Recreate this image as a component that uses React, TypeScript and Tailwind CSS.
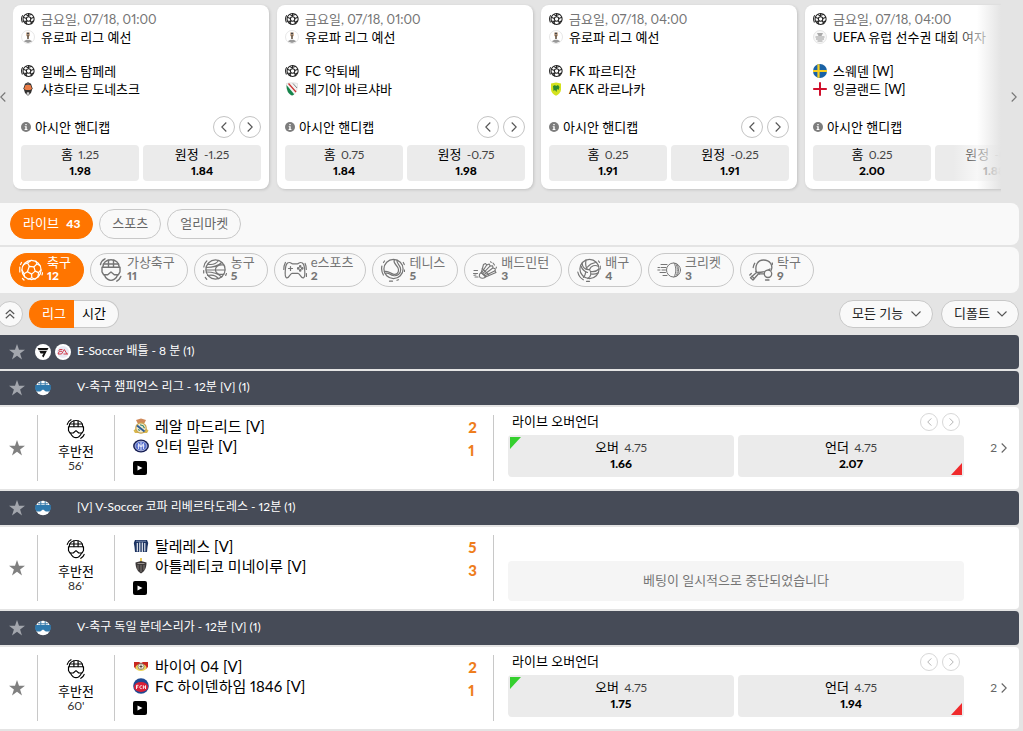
import React, { useState } from 'react';

interface FeaturedMatch {
  date: string;
  league: string;
  leagueIcon: React.ReactNode;
  home: string;
  homeIcon: React.ReactNode;
  away: string;
  awayIcon: React.ReactNode;
  homeLine: string;
  homeOdds: string;
  awayLine: string;
  awayOdds: string;
}

interface LiveMatch {
  minute: string;
  home: string;
  homeIcon: React.ReactNode;
  away: string;
  awayIcon: React.ReactNode;
  score: [number, number];
  odds?: [string, string];
}

interface League {
  title: string;
  esport?: boolean;
  match?: LiveMatch;
}

/* ---------- icons ---------- */

const BallIcon = () => (
  <svg viewBox="0 0 24 24" className="size-6" fill="none" stroke="currentColor" strokeWidth="1.2" strokeLinejoin="round" strokeLinecap="round">
    <circle cx="12.5" cy="12" r="9.6" />
    <path d="M10.3 8.3l4.6.6 1.3 4.2-3.600 3-4.200-2.300z" />
    <path d="M10.300 8.300L8.500 5l3.500-2.600M8.500 5L4.600 6.500M14.900 8.900L17.900 6l3 1.400M17.900 6l-1-3M16.200 13.100l3.400 1.500 2.300-2.600M19.600 14.600l-.7 4.200M12.600 16.100l.2 3.600 3.300 1.600M12.800 19.700l-3.700 1.600M8.400 13.800l-3.300 1.900.4 3.200M5.100 15.700L3 12" />
    <path d="M.8 9v5M2.500 4.500L1.500 6.500M23.800 14.500l-.8 2.500M3.500 20.500L5 22" />
  </svg>
);

const SmallBall = () => (
  <svg viewBox="0 0 24 24" className="size-3.5 shrink-0 text-[#222]" fill="none" stroke="currentColor" strokeWidth="1.8">
    <circle cx="13" cy="12" r="9.5" />
    <circle cx="13" cy="12" r="3.8" />
    <path d="M13 8.2V2.5M16.7 11l5.6-2M15.3 15l3.6 5M10.7 15l-3.5 5M9.3 11L3.800 9M8 4l3 2 4-1 4-1M4 16l4 0 2 5M22 15l-4 2-1 4M3 5.500C1 8 .8 14 2.500 18" />
  </svg>
);

const HelmetIcon: React.FC<{ className?: string }> = ({ className }) => (
  <svg viewBox="0 0 24 24" className={className} fill="none" stroke="currentColor" strokeWidth="1.4" strokeLinejoin="round" strokeLinecap="round">
    <path d="M3.800 9.300C3.800 4.500 7.500 1.800 12 1.800s8.200 2.700 8.200 7.500" />
    <path d="M3 9.300h18v4.500l-1.700 3h-4L12 14l-3.300 2.800h-4L3 13.800z" />
    <path d="M5.500 17c.5 2 1.500 3.200 3 4.200 2.200 1.500 4.800 1.500 7 0 1.500-1 2.500-2.200 3-4.200" />
    <path d="M9.500 2.300v6.800M14.500 2.300v6.800M4.500 6h15M1.500 6.500C2 4 3.500 2 6 .8M21.800 18.500c-.8 2-2 3.500-4 4.700" />
  </svg>
);

const BasketballIcon = () => (
  <svg viewBox="0 0 24 24" className="size-6" fill="none" stroke="currentColor" strokeWidth="1.200" strokeLinecap="round">
    <circle cx="12.500" cy="11.500" r="9.600" />
    <path d="M3 12h19M4.500 6.200C9 7 13.500 5.500 15.500 2.500M4.500 17.500c4.500-1 9 .5 11 3.200M21 7C9.500 5 9.500 18.500 21 16.200M3.200 9.500c4.500 0 11-.5 15.500-5M3.200 14c4.500 0 11 .5 15.500 5" />
    <path d="M.8 9c.2-2.500 1.300-4.600 3-6M2.300 19.500l1.500 1.800M.7 12.500v2.500M23.500 15.500l-.8 2" />
  </svg>
);

const GamepadIcon = () => (
  <svg viewBox="0 0 24 24" className="size-6" fill="none" stroke="currentColor" strokeWidth="1.200" strokeLinejoin="round" strokeLinecap="round">
    <path d="M6.500 4.500c1.500 0 2 1.300 3 1.300h5c1 0 1.500-1.300 3-1.300 3.200 0 3.700 2.500 4.100 6.500.3 3 .6 8.200-1.200 8.900-2.300.8-3.400-4.500-5.400-4.500H9c-2 0-3.100 5.300-5.400 4.500-1.800-.7-1.500-5.900-1.200-8.900.4-4 .9-6.500 4.100-6.500z" />
    <path d="M7.500 8.500v4M5.500 10.500h4M.8 11.500c0-3 .5-5 1.600-7M23.300 11.500c0-3-.4-4.500-1.200-6M23.400 15.500v3" />
    <circle cx="17.200" cy="8.400" r=".7" /><circle cx="17.200" cy="12.400" r=".7" />
    <circle cx="15.200" cy="10.400" r=".7" /><circle cx="19.200" cy="10.400" r=".7" />
  </svg>
);

const TennisIcon = () => (
  <svg viewBox="0 0 24 24" className="size-6" fill="none" stroke="currentColor" strokeWidth="1.200" strokeLinecap="round">
    <circle cx="12.500" cy="11" r="9.600" />
    <path d="M13.300 1.600c-1.800 4.400 3.700 5.400 4.200 9.900.4 3.500-2.200 5.500-5.300 4.700-3.200-.8-4.200-3.700-8.900-2.700M16 2.300c-.8 3.200 3.600 4.700 3.700 9.200.1 4.500-3.500 7-7.700 6-3-.7-4-3-7-2.300" />
    <path d="M.9 8c-.7 3-.2 6 1.500 9M2.500 4.500l1-1.500M8.500 23.200h3M22.300 4.500l1 2M16 22.300l1.500-.6M23.500 12v1.500" />
  </svg>
);

const ShuttleIcon = () => (
  <svg viewBox="0 0 24 24" className="size-6" fill="none" stroke="currentColor" strokeWidth="1.100" strokeLinejoin="round" strokeLinecap="round">
    <path d="M8.300 14.500L10.500 6.500l2-1 1.200 1.500 2.500-1 1 2 2.500-.3.300 2.300 2.300.7-.3 2.300 1 1.500-10.500 4.500" />
    <path d="M8.300 14.500c-2 .8-2.500 3.500-1.300 4.800 1.500 1.500 4.500 1.200 5.500-.6z" />
    <path d="M9.200 14l4.500-7M10.200 15.200l6.800-7M11.200 16.500l8.600-6.500M12 17.800l10-5M9.300 10.500l6.500 6.300M8.300 14.500l4.200 4.200M1 12.500h3.500M.5 15.500h4M2 19h3M1 17.300l2-.3M20 5l1.500 2M17.500 3.800l.8.600M23.300 9v1" />
  </svg>
);

const VolleyballIcon = () => (
  <svg viewBox="0 0 24 24" className="size-6" fill="none" stroke="currentColor" strokeWidth="1.200" strokeLinecap="round">
    <circle cx="12.500" cy="11" r="9.600" />
    <path d="M12.500 11.500C8 12 5.500 9 5 5.200M12.500 11.500c1.500-4 5.500-5 9.200-3M12.500 11.500c2.500 3.500 1.500 7-1.700 9" />
    <path d="M10 10.800C8.500 8.500 8.500 5 9 2.200M4 8c1 3 3.500 5.500 6.500 6.500M10.500 9c2-2.500 5-4 8-4.500M14 13.500c3 .5 6-.5 8-2.500M14.300 16c2.500.5 4.500 0 6.500-1M8.800 13.600c-.3 2.500-1 4.500-2.300 5.700" />
    <path d="M.8 14c.7 3.500 2.500 6 5.500 7.800M23.800 8v3M9.500 23.300h3M21.500 3l1 1.300" />
  </svg>
);

const CricketIcon = () => (
  <svg viewBox="0 0 24 24" className="size-6" fill="none" stroke="currentColor" strokeWidth="1" strokeLinecap="round">
    <circle cx="16.500" cy="12" r="7" />
    <path d="M17 5c2.500 4 2.500 10 0 14M20 6c2 3.500 2 8.500 0 12" />
    <path d="M18.500 5.500c2.500 4 2.500 9 0 13" strokeDasharray="1 1.200" />
    <path d="M4 6.500h6M1 9.500h1.500M4 9.500h5M.8 12H3M5 12h3.500M3 14.500h5.500M6 17.500h4" />
  </svg>
);

const PingPongIcon = () => (
  <svg viewBox="0 0 24 24" className="size-6" fill="none" stroke="currentColor" strokeWidth="1.300" strokeLinejoin="round" strokeLinecap="round">
    <path d="M15 15.800H9.500L4 22l-2.500-2.300 6-5.200c-2-6.500 1-12.500 7-12.500 6.500 0 10 5.500 7.500 10.500" />
    <path d="M6.800 13.500l3.700 2.500M8 14.500c4 0 9-.5 13-3.500M3 18.300l2.400 2.300M4.200 9.500c.2-1.500.7-3 1.500-4.200M23.200 5l.6 1.500M.8 17L2.300 15.500M16.500 22h3.500" />
    <circle cx="19" cy="15.800" r="3.700" fill="#f9f9f9" />
  </svg>
);

const StarIcon = () => (
  <svg viewBox="0 0 16 16" className="size-4" fill="currentColor">
    <path d="M8 0l2 5.800h6l-4.900 3.600L13 15.500 8 11.800l-5 3.700 1.900-6.100L0 5.800h6z" />
  </svg>
);

const Chevron: React.FC<{ left?: boolean; className?: string }> = ({ left, className = 'h-2.5 w-[6px]' }) => (
  <svg viewBox="0 0 6 10" className={className} fill="none" stroke="currentColor" strokeWidth="1.100">
    <path d={left ? 'M5.300.5L.8 5l4.500 4.500' : 'M.7.5L5.200 5 .7 9.500'} />
  </svg>
);

const InfoIcon = () => (
  <svg viewBox="0 0 10 10" className="size-2.5 shrink-0">
    <circle cx="5" cy="5" r="5" fill="#7d7d7d" />
    <path d="M4.300 2h1.400v1.300H4.300zM3.700 4.200h2v2.900h.7V8H3.600v-.9h.7V5.100h-.6z" fill="#fff" />
  </svg>
);

/* ---------- crests ---------- */

const EuropaCrest = () => (
  <svg viewBox="0 0 14 14" className="size-3.5 shrink-0">
    <circle cx="7" cy="7" r="6.500" fill="#fff" stroke="#ddd" strokeWidth=".7" />
    <path d="M5 2.500h4v3L7 7.500l-2-2z" fill="#cfb49c" />
    <path d="M6.200 5h1.600v4H6.200z" fill="#654" />
    <path d="M3 11.500c1-2.500 7-2.500 8 0l-4 1.500z" fill="#999" />
    <circle cx="7" cy="3.500" r="1.100" fill="#444" />
  </svg>
);

const UefaCrest = () => (
  <svg viewBox="0 0 14 14" className="size-3.5 shrink-0">
    <circle cx="7" cy="7" r="6.500" fill="#f7f7f7" stroke="#ddd" strokeWidth=".7" />
    <path d="M4 3h6L8.500 6h-3z" fill="#aaa" />
    <path d="M2.500 7h9M3 9h8M4.500 11h5" stroke="#999" strokeWidth="1" />
  </svg>
);

const ShakhtarCrest = () => (
  <svg viewBox="0 0 14 14" className="size-3.5 shrink-0">
    <path d="M7 .3l3 1.500 1.500 4.500L10 11l-3 2.700L4 11 2.500 6.300 4 1.800z" fill="#32302f" />
    <path d="M4.500 3h5l1.500 4-2 1H5L3 7z" fill="#e97b46" />
    <path d="M5.500 2h3M6 10.500h2v2H6z" stroke="#bbb" strokeWidth=".6" fill="#ddd" />
  </svg>
);

const LegiaCrest = () => (
  <svg viewBox="0 0 14 14" className="size-3.5 shrink-0">
    <path d="M1.500 1.500C5 .5 9 .5 12.500 1.500c0 6-1 10-5.500 12-4.500-2-5.500-6-5.500-12z" fill="#f4f4f4" stroke="#ccc" strokeWidth=".5" />
    <path d="M1.500 3l7.700 9.200c-.6.500-1.300.9-2.200 1.300-4.200-1.800-5.300-5.500-5.500-10.500z" fill="#15854b" />
    <path d="M3.500 1.500l7.500 8.500" stroke="#c33" strokeWidth="1.300" />
    <path d="M8 1.500l4 4.500" stroke="#555" strokeWidth=".7" />
  </svg>
);

const AekCrest = () => (
  <svg viewBox="0 0 14 14" className="size-3.5 shrink-0">
    <path d="M2 1.500L7 .5l5 1v6c0 3-2.500 5-5 6.200C4.500 12.500 2 10.500 2 7.500z" fill="#d4e21e" />
    <path d="M4 4l2-1 1 1 2-1 1.500 2-1 3L8 7l-.5 3L6 8 4.500 9z" fill="#2b8a2d" />
  </svg>
);

const SwedenFlag = () => (
  <svg viewBox="0 0 14 14" className="size-3.5 shrink-0">
    <circle cx="7" cy="7" r="7" fill="#1a62a5" />
    <path d="M5.500.2v13.600M0 7h14" stroke="#f8cf20" strokeWidth="2.200" />
  </svg>
);

const EnglandFlag = () => (
  <svg viewBox="0 0 14 14" className="size-3.5 shrink-0">
    <circle cx="7" cy="7" r="7" fill="#fff" />
    <path d="M7 .2v13.600M.2 7h13.600" stroke="#d0102c" strokeWidth="2" />
  </svg>
);

const RealCrest = () => (
  <svg viewBox="0 0 16 16" className="size-4 shrink-0">
    <path d="M4.500 5L3 2 8 .5 13 2l-1.500 3z" fill="#d08a5a" />
    <path d="M.5 12.500l3-2.500h9l3 2.500-1.500 2.500h-12z" fill="#d9b94f" />
    <circle cx="8" cy="10" r="5.200" fill="#f3ead0" stroke="#c9a24a" strokeWidth="1.200" />
    <path d="M4 7.500l7.500 6" stroke="#2a5c97" strokeWidth="2" />
    <path d="M7 6.800l3 1 1.500 2.500M5 11.500l2 1" stroke="#3b8a70" strokeWidth="1.200" fill="none" />
  </svg>
);

const InterCrest = () => (
  <svg viewBox="0 0 16 16" className="size-4 shrink-0">
    <ellipse cx="8" cy="8" rx="7.900" ry="6.500" fill="#10184f" />
    <ellipse cx="8" cy="8" rx="6" ry="4.800" fill="#5a72cf" stroke="#dfe4f7" strokeWidth=".7" />
    <path d="M5.500 11V5.500L8 9l2.500-3.500V11M8 4v8M4.500 8h7" stroke="#e6eafa" strokeWidth=".9" fill="none" />
  </svg>
);

const TalleresCrest = () => (
  <svg viewBox="0 0 16 16" className="size-4 shrink-0">
    <path d="M2 2h12l1.200 3-.7 4-.5 5H2l-.5-5-.7-4z" fill="#1c3361" />
    <path d="M4.300 5v8.500M6.800 4.500V14M9.300 4.500V14M11.800 5v8.500" stroke="#f4f6fa" strokeWidth="1.100" />
    <path d="M3 3.200h10" stroke="#8fa0c0" strokeWidth=".8" />
  </svg>
);

const MineiroCrest = () => (
  <svg viewBox="0 0 16 16" className="size-4 shrink-0">
    <path d="M8 0v4" stroke="#e6bd28" strokeWidth="1.500" />
    <path d="M2.500 4.500L8 3l5.500 1.500C13.500 9.500 12 13 8 15.500 4 13 2.500 9.500 2.500 4.500z" fill="#3c3838" />
    <path d="M5 7v5M8 7v7M11 7v5" stroke="#8d8884" strokeWidth=".8" />
    <path d="M4.500 5.500h7" stroke="#b0aaa4" strokeWidth=".8" />
  </svg>
);

const LeverkusenCrest = () => (
  <svg viewBox="0 0 16 16" className="size-4 shrink-0">
    <path d="M1 4h5l2 1 2-1h5v5l-2 2H3L1 9z" fill="#c8281f" />
    <ellipse cx="8" cy="9.500" rx="5.500" ry="3.600" fill="#ead45c" />
    <circle cx="8" cy="8.500" r="3" fill="#f6f0dc" stroke="#555" strokeWidth=".6" />
    <path d="M6.500 8.500h3M8 6.500v4" stroke="#333" strokeWidth=".8" />
  </svg>
);

const HeidenheimCrest = () => (
  <svg viewBox="0 0 16 16" className="size-4 shrink-0">
    <circle cx="8" cy="8" r="7.800" fill="#1f4a93" />
    <ellipse cx="8" cy="9" rx="7" ry="5" fill="#da1f37" />
    <path d="M3.500 11V7.300h2M3.500 9h1.700M8.700 7.600c-2.500-.6-2.500 3.700 0 3M10.300 7.300V11M12.500 7.300V11M10.300 9h2.200" stroke="#fff" strokeWidth=".9" fill="none" />
  </svg>
);

const BattleBadge = () => (
  <svg viewBox="0 0 16 16" className="size-4 shrink-0">
    <circle cx="8" cy="8" r="8" fill="#fff" />
    <path d="M2.500 4h11l-1.200 2.200H3.700zM4.300 7h7.500L8.500 13.500 7 12l1.500-2.500H5.600z" fill="#111" />
  </svg>
);

const EaBadge = () => (
  <svg viewBox="0 0 16 16" className="size-4 shrink-0">
    <circle cx="8" cy="8" r="8" fill="#fff" />
    <circle cx="8" cy="8" r="6" fill="#e9e9f3" />
    <path d="M7.500 5.500h-3l-.7 1.300M7 7.300H4.300L3 10h3.500l2.800-4.500L12 10h-3.500M12 10h1" stroke="#d23b4b" strokeWidth="1" fill="none" />
  </svg>
);

const VirtualBadge = () => (
  <svg viewBox="0 0 16 16" className="size-4 shrink-0">
    <circle cx="8" cy="8" r="7.300" fill="#fff" />
    <path d="M5.800 1v4M10.200 1v4M3 3.800h10" stroke="#397aa8" strokeWidth="1" />
    <path d="M.2 5h15.600v4.500l-1.600 2h-3.400L8 9.500l-2.800 2H1.800L.2 9.500z" fill="#2f79ad" />
  </svg>
);

/* ---------- data ---------- */

const featured: FeaturedMatch[] = [
  {
    date: '금요일, 07/18, 01:00', league: '유로파 리그 예선', leagueIcon: <EuropaCrest />,
    home: '일베스 탐페레', homeIcon: <SmallBall />, away: '샤흐타르 도네츠크', awayIcon: <ShakhtarCrest />,
    homeLine: '1.25', homeOdds: '1.98', awayLine: '-1.25', awayOdds: '1.84',
  },
  {
    date: '금요일, 07/18, 01:00', league: '유로파 리그 예선', leagueIcon: <EuropaCrest />,
    home: 'FC 악퇴베', homeIcon: <SmallBall />, away: '레기아 바르샤바', awayIcon: <LegiaCrest />,
    homeLine: '0.75', homeOdds: '1.84', awayLine: '-0.75', awayOdds: '1.98',
  },
  {
    date: '금요일, 07/18, 04:00', league: '유로파 리그 예선', leagueIcon: <EuropaCrest />,
    home: 'FK 파르티잔', homeIcon: <SmallBall />, away: 'AEK 라르나카', awayIcon: <AekCrest />,
    homeLine: '0.25', homeOdds: '1.91', awayLine: '-0.25', awayOdds: '1.91',
  },
  {
    date: '금요일, 07/18, 04:00', league: 'UEFA 유럽 선수권 대회 여자', leagueIcon: <UefaCrest />,
    home: '스웨덴 [W]', homeIcon: <SwedenFlag />, away: '잉글랜드 [W]', awayIcon: <EnglandFlag />,
    homeLine: '0.25', homeOdds: '2.00', awayLine: '-0.25', awayOdds: '1.88',
  },
];

const sports = [
  { name: '축구', count: 12, icon: <BallIcon /> },
  { name: '가상축구', count: 11, icon: <HelmetIcon className="size-6" /> },
  { name: '농구', count: 5, icon: <BasketballIcon /> },
  { name: 'e스포츠', count: 2, icon: <GamepadIcon /> },
  { name: '테니스', count: 5, icon: <TennisIcon /> },
  { name: '배드민턴', count: 3, icon: <ShuttleIcon /> },
  { name: '배구', count: 4, icon: <VolleyballIcon /> },
  { name: '크리켓', count: 3, icon: <CricketIcon /> },
  { name: '탁구', count: 9, icon: <PingPongIcon /> },
];

const leagues: League[] = [
  { title: 'E-Soccer 배틀 - 8 분 (1)', esport: true },
  {
    title: 'V-축구 챔피언스 리그 - 12분 [V] (1)',
    match: {
      minute: "56'", home: '레알 마드리드 [V]', homeIcon: <RealCrest />, away: '인터 밀란 [V]', awayIcon: <InterCrest />,
      score: [2, 1], odds: ['1.66', '2.07'],
    },
  },
  {
    title: '[V] V-Soccer 코파 리베르타도레스 - 12분 (1)',
    match: {
      minute: "86'", home: '탈레레스 [V]', homeIcon: <TalleresCrest />, away: '아틀레티코 미네이루 [V]', awayIcon: <MineiroCrest />,
      score: [5, 3],
    },
  },
  {
    title: 'V-축구 독일 분데스리가 - 12분 [V] (1)',
    match: {
      minute: "60'", home: '바이어 04 [V]', homeIcon: <LeverkusenCrest />, away: 'FC 하이덴하임 1846 [V]', awayIcon: <HeidenheimCrest />,
      score: [2, 1], odds: ['1.75', '1.94'],
    },
  },
];

/* ---------- pieces ---------- */

const OddsLabel: React.FC<{ name: string; line: string; odds: string }> = ({ name, line, odds }) => (
  <>
    <span className="block text-[13px] leading-4 whitespace-nowrap">
      {name} <span className="ml-0.5 text-xs leading-4 text-[#444]">{line}</span>
    </span>
    <span className="block text-xs leading-4 font-black">{odds}</span>
  </>
);

const IconLine: React.FC<{ icon: React.ReactNode; text: string; muted?: boolean }> = ({ icon, text, muted }) => (
  <div className="flex h-[18px] items-center gap-1.5">
    {icon}
    <span className={`whitespace-nowrap ${muted ? 'text-[#757575]' : ''}`}>{text}</span>
  </div>
);

const FeaturedCard: React.FC<{ match: FeaturedMatch }> = ({ match }) => (
  <article className="w-64 shrink-0 rounded-lg bg-white px-2 pt-[5px] pb-2 text-[13px] leading-[18px] shadow-[1px_1px_3px_rgba(0,0,0,0.15)]">
    <IconLine icon={<SmallBall />} text={match.date} muted />
    <IconLine icon={match.leagueIcon} text={match.league} />
    <div className="mt-4">
      <IconLine icon={match.homeIcon} text={match.home} />
      <IconLine icon={match.awayIcon} text={match.away} />
    </div>
    <div className="mt-[18px] flex h-[22px] items-center gap-1">
      <InfoIcon />
      <span className="flex-1">아시안 핸디캡</span>
      <button aria-label="이전 마켓" className="flex size-[22px] items-center justify-center rounded-full border border-[#c4c4c4] text-[#555]">
        <Chevron left />
      </button>
      <button aria-label="다음 마켓" className="flex size-[22px] items-center justify-center rounded-full border border-[#c4c4c4] text-[#555]">
        <Chevron />
      </button>
    </div>
    <div className="mt-[7px] grid grid-cols-2 gap-1">
      <button className="h-9 rounded bg-[#ebebeb] pb-0.5">
        <OddsLabel name="홈" line={match.homeLine} odds={match.homeOdds} />
      </button>
      <button className="h-9 rounded bg-[#ebebeb] pb-0.5">
        <OddsLabel name="원정" line={match.awayLine} odds={match.awayOdds} />
      </button>
    </div>
  </article>
);

const LeagueHeader: React.FC<{ league: League }> = ({ league }) => (
  <header className="flex h-[34px] items-center rounded-r bg-[#464b57] pl-[9px] text-white">
    <button aria-label="리그 즐겨찾기" className="mr-2.5 text-[#a3a6ad]"><StarIcon /></button>
    <div className="flex w-[42px] gap-1">
      {league.esport ? <><BattleBadge /><EaBadge /></> : <VirtualBadge />}
    </div>
    <h2 className="pb-0.5 text-xs leading-4">{league.title}</h2>
  </header>
);

const MatchRow: React.FC<{ match: LiveMatch }> = ({ match }) => (
  <article className="flex h-[82px] rounded-r bg-white py-2">
    <button aria-label="경기 즐겨찾기" className="flex w-[37px] shrink-0 items-center pl-[9px] text-[#808080]"><StarIcon /></button>
    <div className="flex w-[78px] shrink-0 flex-col items-center border-x border-[#c8c8c8] pt-1 text-[13px]">
      <HelmetIcon className="size-5" />
      <span className="mt-1 leading-4">후반전</span>
      <span className="text-xs leading-[14px] text-[#333]">{match.minute}</span>
    </div>
    <div className="flex w-[379px] shrink-0 justify-between border-r border-[#c8c8c8] pr-4 pl-[18px]">
      <div className="pt-px text-[15px] leading-5">
        <div className="flex h-5 items-center gap-1.5">{match.homeIcon}<span>{match.home}</span></div>
        <div className="flex h-5 items-center gap-1.5">{match.awayIcon}<span>{match.away}</span></div>
        <button aria-label="영상 보기" className="mt-[5px] block">
          <svg viewBox="0 0 14 14" className="size-3.5">
            <rect width="14" height="14" rx="2" fill="#000" />
            <path d="M4.500 4.500l5 2.500-5 2.500z" fill="#fff" />
          </svg>
        </button>
      </div>
      <div className="pt-px text-[15px] leading-[23px] font-black text-[#ee7d1b]">
        <div>{match.score[0]}</div>
        <div>{match.score[1]}</div>
      </div>
    </div>
    <div className="min-w-0 flex-1 pl-3.5">
      {match.odds ? (
        <>
          <div className="flex h-5 items-start gap-1 pr-1 pl-1">
            <h3 className="flex-1 text-[13px] leading-3">라이브 오버언더</h3>
            <button aria-label="이전 마켓" className="-mt-0.5 flex size-[18px] items-center justify-center rounded-full border border-[#d8d8d8] text-[#aaa]">
              <Chevron left className="h-2 w-[5px]" />
            </button>
            <button aria-label="다음 마켓" className="-mt-0.5 flex size-[18px] items-center justify-center rounded-full border border-[#d8d8d8] text-[#aaa]">
              <Chevron className="h-2 w-[5px]" />
            </button>
          </div>
          <div className="grid grid-cols-2 gap-1">
            <button className="relative h-[42px] rounded bg-[#ebebeb] pb-0.5">
              <svg viewBox="0 0 11 12" className="absolute top-0.5 left-0.5 h-3 w-[11px]"><path d="M0 0h11L0 12z" fill="#35d02f" /></svg>
              <OddsLabel name="오버" line="4.75" odds={match.odds[0]} />
            </button>
            <button className="relative h-[42px] rounded bg-[#ebebeb] pb-0.5">
              <OddsLabel name="언더" line="4.75" odds={match.odds[1]} />
              <svg viewBox="0 0 11 12" className="absolute right-0.5 bottom-0.5 h-3 w-[11px]"><path d="M11 0v12H0z" fill="#f02a2c" /></svg>
            </button>
          </div>
        </>
      ) : (
        <div className="mt-[26px] flex h-10 items-center justify-center rounded bg-[#f5f5f5] text-[13px] text-[#757575]">
          베팅이 일시적으로 중단되었습니다
        </div>
      )}
    </div>
    <div className="flex w-[55px] shrink-0 items-center justify-end pr-3">
      {match.odds && (
        <button className="flex items-center gap-1 text-xs text-[#666]">2 <Chevron /></button>
      )}
    </div>
  </article>
);

const FilterSelect: React.FC<{ label: string; option: string }> = ({ label, option }) => (
  <div className="grid items-center">
    <select aria-label={label} className="col-start-1 row-start-1 h-7 appearance-none rounded-full border border-[#c8c8c8] bg-[#f9f9f9] pr-7 pl-3 text-[13px] text-[#222]">
      <option>{option}</option>
    </select>
    <svg viewBox="0 0 10 6" className="pointer-events-none col-start-1 row-start-1 mr-3 h-1.5 w-2.5 justify-self-end" fill="none" stroke="#555" strokeWidth="1.100">
      <path d="M.5.5L5 5 9.500.5" />
    </svg>
  </div>
);

const App: React.FC = () => {
  const [sport, setSport] = useState('축구');
  const [view, setView] = useState('리그');

  return (
    <div className="min-h-screen overflow-x-hidden bg-[#e4e4e4] font-['Lato','Noto_Sans_CJK_KR',sans-serif] text-black proportional-nums">
      <section className="flex">
        <button aria-label="이전 경기" className="w-[13px] shrink-0 pb-2.5 text-[#777]"><Chevron left /></button>
        <div className="relative min-w-0 flex-1">
          <div className="flex gap-2 overflow-hidden pt-[5px] pb-3.5">
            {featured.map((match) => <FeaturedCard key={match.home} match={match} />)}
          </div>
          <div className="pointer-events-none absolute inset-y-0 right-0 mt-[5px] mb-3.5 w-12 bg-linear-to-r from-white/0 via-white/60 to-[#e4e4e4]" />
        </div>
        <button aria-label="다음 경기" className="flex w-[22px] shrink-0 items-center justify-center pb-2.5 pl-1 text-[#777]"><Chevron /></button>
      </section>

      <main className="mr-1">
        <nav className="flex h-[42px] items-center gap-1.5 rounded-r-lg bg-[#f9f9f9] pl-2.5 text-[13px] text-[#666]">
          <button className="h-[30px] rounded-full border border-[#ff7500] bg-[#ff7500] px-3 text-white">
            라이브 <span className="ml-1 text-xs font-black">43</span>
          </button>
          <button className="h-[30px] rounded-full border border-[#c8c8c8] px-3">스포츠</button>
          <button className="h-[30px] rounded-full border border-[#c8c8c8] px-3">얼리마켓</button>
        </nav>

        <nav className="mt-0.5 flex h-[46px] items-center gap-1.5 rounded-r-lg bg-[#f9f9f9] pl-2.5">
          {sports.map((s) => (
            <button
              key={s.name}
              onClick={() => setSport(s.name)}
              className={`flex h-[34px] shrink-0 items-center gap-1 rounded-full border pr-3 pl-2 text-left ${
                s.name === sport ? 'border-[#ff7500] bg-[#ff7500] text-white' : 'border-[#c8c8c8] text-[#757575]'
              }`}
            >
              {s.icon}
              <span className="pb-0.5">
                <span className="block text-[13px] leading-[14px]">{s.name}</span>
                <span className="block text-xs leading-[14px] font-black">{s.count}</span>
              </span>
            </button>
          ))}
        </nav>

        <div className="flex h-[42px] items-center">
          <button aria-label="모두 접기" className="-ml-[3px] flex size-[26px] items-center justify-center rounded-full border border-[#c8c8c8] bg-[#f9f9f9] text-[#555]">
            <svg viewBox="0 0 10 10" className="size-2.5" fill="none" stroke="currentColor" strokeWidth="1.200">
              <path d="M.8 5L5 1l4.200 4M.8 9.300L5 5.300l4.200 4" />
            </svg>
          </button>
          <div className="ml-1.5 flex h-7 text-[13px]">
            <button
              onClick={() => setView('리그')}
              className={`rounded-l-full border border-r-0 pr-2 pl-3 ${view === '리그' ? 'border-[#ff7500] bg-[#ff7500] text-white' : 'border-[#c8c8c8] bg-[#f9f9f9]'}`}
            >
              리그
            </button>
            <button
              onClick={() => setView('시간')}
              className={`rounded-r-full border border-l-0 pr-3 pl-2 ${view === '시간' ? 'border-[#ff7500] bg-[#ff7500] text-white' : 'border-[#c8c8c8] bg-[#f9f9f9]'}`}
            >
              시간
            </button>
          </div>
          <div className="ml-auto flex gap-2">
            <FilterSelect label="기능" option="모든 기능" />
            <FilterSelect label="정렬" option="디폴트" />
          </div>
        </div>

        <div className="flex flex-col gap-0.5">
          {leagues.map((league) => (
            <section key={league.title} className="flex flex-col gap-0.5">
              <LeagueHeader league={league} />
              {league.match && <MatchRow match={league.match} />}
            </section>
          ))}
        </div>
      </main>
    </div>
  );
};

export default App;
